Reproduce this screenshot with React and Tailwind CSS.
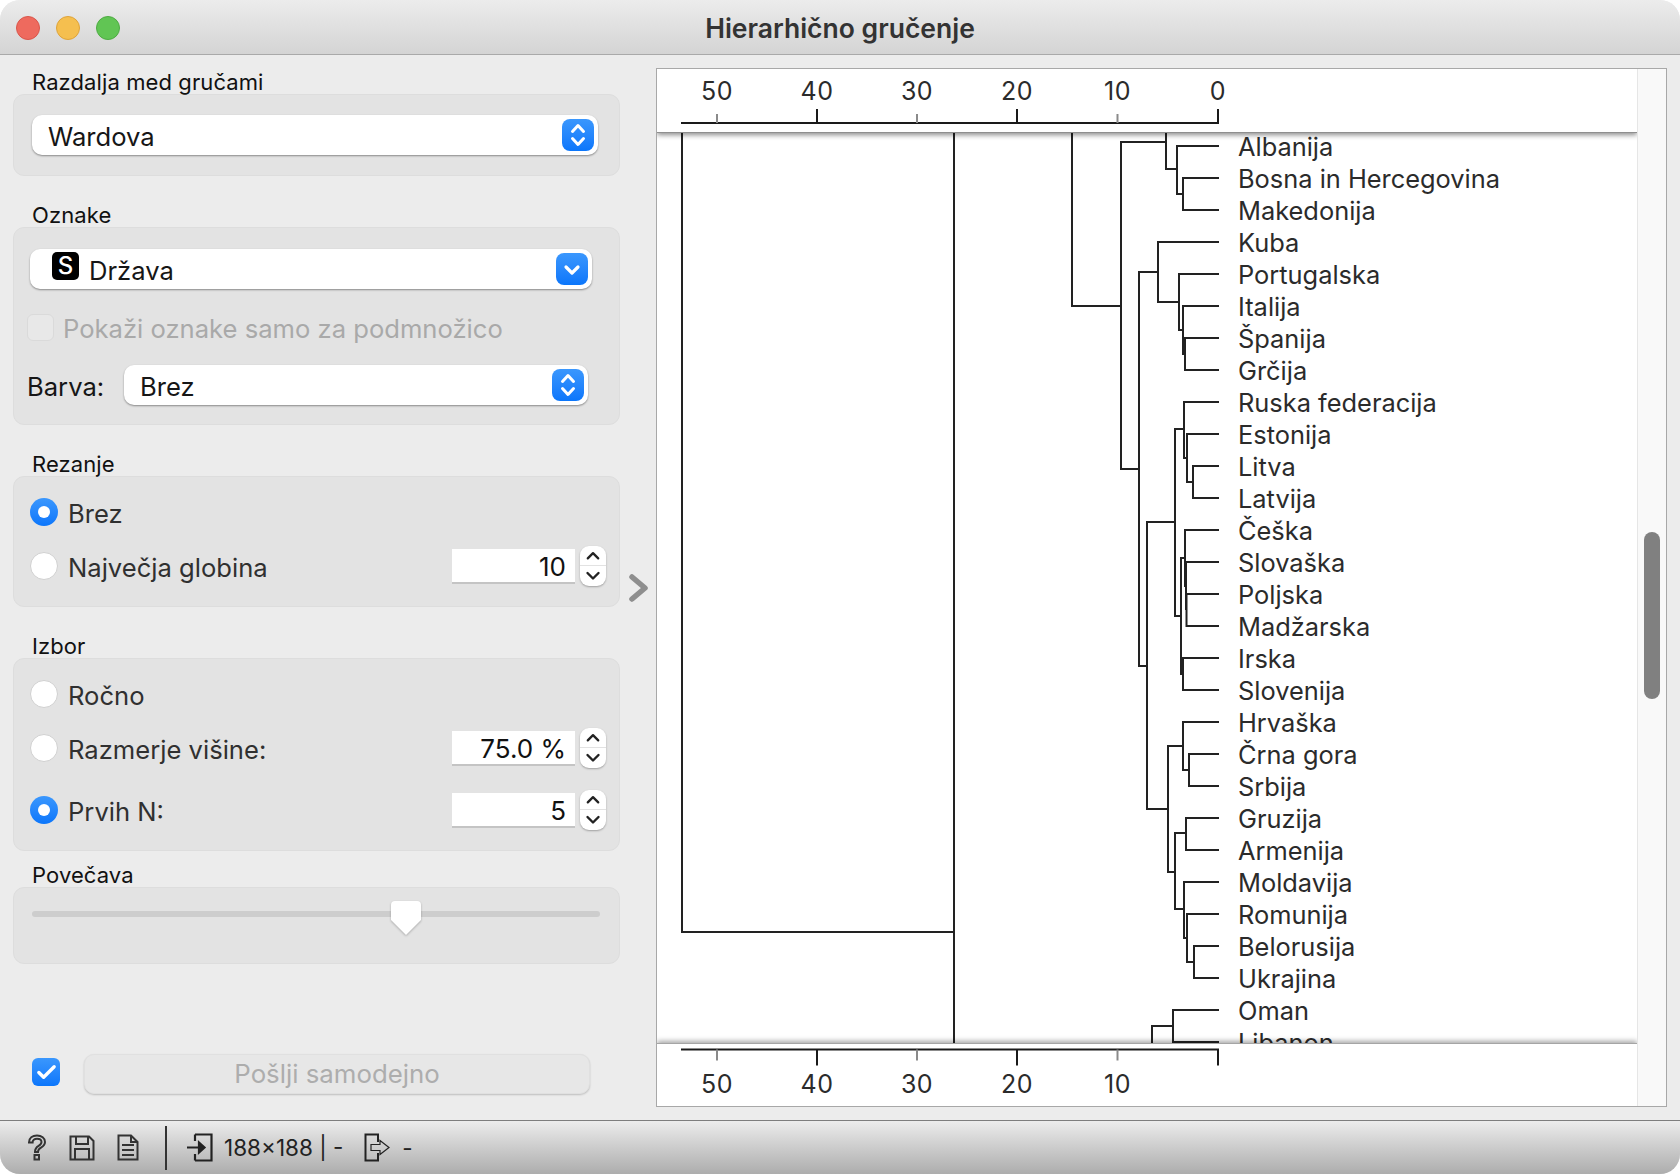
import { Check } from 'lucide-react';

const countries = [
  'Albanija', 'Bosna in Hercegovina', 'Makedonija', 'Kuba', 'Portugalska', 'Italija', 'Španija', 'Grčija',
  'Ruska federacija', 'Estonija', 'Litva', 'Latvija', 'Češka', 'Slovaška', 'Poljska', 'Madžarska', 'Irska',
  'Slovenija', 'Hrvaška', 'Črna gora', 'Srbija', 'Gruzija', 'Armenija', 'Moldavija', 'Romunija', 'Belorusija',
  'Ukrajina', 'Oman', 'Libanon',
];

// dendrogram branches, in window pixels (the svg viewBox starts at 657,133)
const branches = [
  'M682 133V932H954', 'M954 133V1043', 'M1072 133V306H1121', 'M1166 133V169H1177',
  'M1139 469H1121V142H1166', 'M1219 146H1177V194H1183', 'M1219 178H1183V210H1219',
  'M1158 272H1139V666H1147', 'M1219 242H1158V302H1179', 'M1219 274H1179V330H1183',
  'M1219 306H1183V354H1185', 'M1219 338H1185V370H1219',
  'M1184 429H1175V616H1181', 'M1147 522H1175', 'M1219 402H1184V458H1187', 'M1219 434H1187V482H1193',
  'M1219 466H1193V498H1219',
  'M1185 558H1181V674H1183', 'M1219 530H1185V586H1186', 'M1219 562H1186V610', 'M1219 594H1186.5V626H1219',
  'M1219 658H1183V690H1219',
  'M1175 522H1147V809H1168', 'M1183 746H1168V872H1175', 'M1219 722H1183V770H1189', 'M1219 754H1189V786H1219',
  'M1186 833H1175V909H1184', 'M1219 818H1186V850H1219', 'M1219 882H1184V938H1187', 'M1219 914H1187V962H1194',
  'M1219 946H1194V978H1219', 'M1219 1010H1173V1042H1219', 'M1173 1026H1152V1043',
];

const ticks = [
  { x: 717, label: '50', major: false }, { x: 817, label: '40', major: true }, { x: 917, label: '30', major: false },
  { x: 1017, label: '20', major: true }, { x: 1117.5, label: '10', major: false }, { x: 1218, label: '0', major: true },
];

const Updown = () => (
  <svg viewBox="0 0 32 32" className="w-full h-full" fill="none" stroke="white" strokeWidth="3" strokeLinecap="round" strokeLinejoin="round">
    <path d="M10.5 12.5 16 6.5l5.5 6M10.5 19.5l5.5 6 5.5-6" />
  </svg>
);

const Down = () => (
  <svg viewBox="0 0 32 32" className="w-full h-full" fill="none" stroke="white" strokeWidth="3.2" strokeLinecap="round" strokeLinejoin="round">
    <path d="M10 14l6 6 6-6" />
  </svg>
);

const Select = ({ w, children, single }) => (
  <div className={`${w} h-[40px] bg-white rounded-[10px] shadow-[0_1px_2px_rgba(0,0,0,0.4)] flex items-center pr-[4px]`}>
    <div className="flex-1 flex items-center pt-[3px] text-[25.6px] leading-[34px] text-[#161616]">{children}</div>
    <div className="w-[32px] h-[32px] rounded-[8px] bg-gradient-to-b from-[#3a97fd] to-[#0a76fb]">
      {single ? <Down /> : <Updown />}
    </div>
  </div>
);

const Group = ({ title, className, boxClass, children }) => (
  <div className={className}>
    <div className="h-[26px] pl-[19px] text-[22px] leading-[28px] tracking-[0.1px] text-[#111]">{title}</div>
    <div className={`w-[607px] bg-[#e3e3e3] border border-[#dddddd] rounded-[11px] ${boxClass}`}>{children}</div>
  </div>
);

const Radio = ({ on }) => (
  on ? (
    <div className="w-[28px] h-[28px] rounded-full bg-gradient-to-b from-[#3a97fd] to-[#0a76fb] flex items-center justify-center shrink-0">
      <div className="w-[12px] h-[12px] rounded-full bg-white" />
    </div>
  ) : (
    <div className="w-[28px] h-[28px] rounded-full bg-white border border-[#d0d0d0] shrink-0" />
  )
);

const Spin = ({ value }) => (
  <div className="flex items-center ml-auto mr-[13px] gap-[5px]">
    <div className="w-[123px] h-[35px] bg-white border-b-2 border-[#c4c4c4] flex items-center justify-end pr-[9px] pt-[3px] text-[26px] leading-[30px] text-[#111]">
      {value}
    </div>
    <div className="w-[26px] h-[40px] bg-white rounded-[9px] shadow-[0_1px_2px_rgba(0,0,0,0.3)] flex flex-col">
      <svg viewBox="0 0 26 20" className="w-full h-[20px] border-b border-[#e2e2e2]" fill="none" stroke="#222" strokeWidth="2.4" strokeLinecap="round" strokeLinejoin="round">
        <path d="M7.5 13 13 7.5l5.5 5.5" />
      </svg>
      <svg viewBox="0 0 26 20" className="w-full h-[20px]" fill="none" stroke="#222" strokeWidth="2.4" strokeLinecap="round" strokeLinejoin="round">
        <path d="M7.5 7 13 12.5 18.5 7" />
      </svg>
    </div>
  </div>
);

const Row = ({ on, label, className, children }) => (
  <div className={`flex items-center ${className}`}>
    <div className="ml-[16px] mr-[10px] flex"><Radio on={on} /></div>
    <span className="pt-[3px] text-[25.6px] leading-[30px] text-[#303030]">{label}</span>
    {children}
  </div>
);

const Axis = ({ top }) => (
  <svg viewBox={top ? '657 69 980 63' : '657 1044 980 62'} className="w-[980px] h-[63px]">
    <path d={top ? 'M681 123H1219' : 'M681 1049H1219'} stroke="#1a1a1a" strokeWidth="2" fill="none" />
    {ticks.map((t) => (
      <g key={t.x}>
        {top
          ? <path d={`M${t.x} ${t.major ? 109 : 114}V123`} stroke={t.major ? '#1a1a1a' : '#8a8a8a'} strokeWidth="2" />
          : <path d={`M${t.x} 1049V${t.major ? 1065 : 1060}`} stroke={t.major ? '#1a1a1a' : '#8a8a8a'} strokeWidth="2" />}
        {(top || t.label !== '0') && (
          <text x={t.x} y={top ? 100 : 1092} textAnchor="middle" fontSize="25" letterSpacing="0.5" fill="#2b2b2b" fontFamily="Inter, sans-serif">
            {t.label}
          </text>
        )}
      </g>
    ))}
  </svg>
);

const icon = { fill: 'none', stroke: '#333', strokeWidth: 2 };

export default function App() {
  return (
    <div className="w-[1680px] h-[1174px] bg-white font-[Inter,sans-serif]">
      <div className="w-full h-full rounded-[20px] overflow-hidden flex flex-col bg-[#ececec]">
        {/* Title bar */}
        <div className="h-[55px] grid grid-cols-[1fr_auto_1fr] items-center bg-gradient-to-b from-[#ececec] to-[#d4d4d4] border-b border-[#a9a9a9]">
          <div className="flex gap-[16px] pl-[16px] pt-[1px]">
            <div className="w-[24px] h-[24px] rounded-full bg-[#ee6a5e] border border-[#d9564b]" />
            <div className="w-[24px] h-[24px] rounded-full bg-[#f5bf4f] border border-[#dea33a]" />
            <div className="w-[24px] h-[24px] rounded-full bg-[#61c554] border border-[#4eab43]" />
          </div>
          <div className="pt-[2px] text-[26.5px] leading-[36px] font-semibold text-[#333]">Hierarhično gručenje</div>
          <div />
        </div>

        <div className="flex-1 flex min-h-0">
          {/* Controls */}
          <div className="w-[620px] pl-[13px] flex flex-col">
            <Group title="Razdalja med gručami" className="mt-[13px]" boxClass="h-[82px] pt-[20px] pl-[18px]">
              <Select w="w-[566px]"><span className="pl-[16px]">Wardova</span></Select>
            </Group>

            <Group title="Oznake" className="mt-[25px]" boxClass="h-[198px] pt-[21px] pl-[16px]">
              <Select w="w-[562px]" single>
                <span className="ml-[22px] mb-[10px] w-[27px] h-[28px] rounded-[5px] bg-black text-white text-[24px] font-medium flex items-center justify-center">S</span>
                <span className="pl-[10px]">Država</span>
              </Select>
              <div className="flex items-center h-[27px] mt-[25px] -ml-[3px]">
                <div className="w-[27px] h-[27px] rounded-[6px] bg-[#e8e8e8] border border-[#dadada]" />
                <span className="ml-[9px] pt-[3px] text-[25.6px] leading-[30px] text-[#a9a9a9]">Pokaži oznake samo za podmnožico</span>
              </div>
              <div className="flex items-center mt-[24px] -ml-[3px]">
                <span className="w-[97px] pt-[3px] text-[25.6px] leading-[30px] text-[#161616]">Barva:</span>
                <Select w="w-[464px]"><span className="pl-[16px]">Brez</span></Select>
              </div>
            </Group>

            <Group title="Rezanje" className="mt-[25px]" boxClass="h-[131px] pt-[21px]">
              <Row on label="Brez" className="h-[28px]" />
              <Row label="Največja globina" className="h-[28px] mt-[26px]"><Spin value="10" /></Row>
            </Group>

            <Group title="Izbor" className="mt-[25px]" boxClass="h-[193px] pt-[21px]">
              <Row label="Ročno" className="h-[28px]" />
              <Row label="Razmerje višine:" className="h-[28px] mt-[26px]"><Spin value="75.0 %" /></Row>
              <Row on label="Prvih N:" className="h-[28px] mt-[34px]"><Spin value="5" /></Row>
            </Group>

            <Group title="Povečava" className="mt-[10px]" boxClass="h-[77px] pt-[23px] pl-[18px]">
              <div className="relative w-[568px] h-[6px] rounded-full bg-[#cdcdcd]">
                <svg viewBox="0 0 30 34" className="absolute left-[359px] -top-[10px] w-[30px] h-[34px] drop-shadow-[0_1px_1px_rgba(0,0,0,0.25)]">
                  <path d="M4 0H26a4 4 0 0 1 4 4V19L15 34 0 19V4a4 4 0 0 1 4-4Z" fill="white" />
                </svg>
              </div>
            </Group>

            <div className="mt-auto mb-[26px] flex items-center pl-[19px]">
              <div className="w-[28px] h-[28px] mb-[4px] rounded-[6px] bg-gradient-to-b from-[#3a97fd] to-[#0a76fb] flex items-center justify-center">
                <Check size={23} color="white" strokeWidth={3.5} />
              </div>
              <div className="ml-[24px] w-[506px] h-[40px] rounded-[10px] bg-[#e7e7e7] border border-[#e0e0e0] shadow-[0_1px_2px_rgba(0,0,0,0.2)] flex items-center justify-center text-[25.8px] text-[#adadad]">
                Pošlji samodejno
              </div>
            </div>
          </div>

          <div className="w-[36px] flex items-center pl-[8px]">
            <svg viewBox="0 0 22 28" className="w-[22px] h-[28px]" fill="none" stroke="#8e8e8e" strokeWidth="5.5" strokeLinecap="round" strokeLinejoin="round">
              <path d="M4 3l13 11L4 25" />
            </svg>
          </div>

          {/* Dendrogram */}
          <div className="w-[1011px] my-[13px] border border-[#a8a8a8] bg-white flex">
            <div className="w-[980px] flex flex-col overflow-hidden">
              <div className="h-[64px] relative z-10 bg-white border-b border-[#8f8f8f] shadow-[0_2px_5px_rgba(0,0,0,0.45)]">
                <Axis top />
              </div>
              <div className="h-[910px] flex overflow-hidden">
                <svg viewBox="657 133 564 910" className="w-[564px] h-[910px] shrink-0" fill="none" stroke="#222" strokeWidth="2">
                  {branches.map((d) => <path key={d} d={d} />)}
                </svg>
                <div className="pl-[17px] -mt-[2px]">
                  {countries.map((c) => (
                    <div key={c} className="h-[32px] flex items-center text-[25.4px] text-[#2b2b2b] whitespace-nowrap">{c}</div>
                  ))}
                </div>
              </div>
              <div className="h-[63px] relative z-10 bg-white border-t border-[#a5a5a5] shadow-[0_-2px_5px_rgba(0,0,0,0.35)]">
                <Axis />
              </div>
            </div>
            <div className="flex-1 bg-[#f9f9f9] border-l border-[#e6e6e6] flex flex-col items-center">
              <div className="mt-[463px] w-[16px] h-[167px] rounded-full bg-[#808080]" />
            </div>
          </div>
        </div>

        {/* Status bar */}
        <div className="h-[54px] flex items-center pl-[27px] bg-gradient-to-b from-[#ececec] to-[#adadad] border-t border-[#7d7d7d] text-[22.5px] text-[#222]">
          <svg viewBox="0 0 20 27" className="w-[20px] h-[27px]" {...icon}>
            <path d="M2 8.5C2 4 5.5 1.5 10 1.5s8 2.7 8 6.5c0 3-1.8 4.3-4 5.6-1.9 1.1-3 2-3 4.4H8c0-3.3 1.5-5 3.6-6.2 1.8-1 2.9-2 2.9-3.8 0-2-1.9-3.3-4.5-3.3S5.600 6 5.600 8.500Z" />
            <rect x="7.500" y="21" width="4.500" height="4.500" />
          </svg>
          <svg viewBox="0 0 26 26" className="ml-[22px] w-[26px] h-[26px]" {...icon}>
            <path d="M1.500 1.500H20L24.500 6V24.500H1.500Z" />
            <path d="M7 1.500V9H19V1.500M6 24.500V14H20V24.500" />
          </svg>
          <svg viewBox="0 0 22 27" className="ml-[22px] w-[22px] h-[27px]" {...icon}>
            <path d="M1.500 1.500H14L20.500 8V25.500H1.500Z" />
            <path d="M14 1.500V8H20.500M5 11H17M5 16H17M5 21H17" />
          </svg>
          <div className="ml-[26px] w-[2px] h-[44px] bg-[#333]" />
          <svg viewBox="0 0 26 29" className="ml-[20px] w-[26px] h-[29px]" fill="none" stroke="#222" strokeWidth="2.200">
            <path d="M8 1.500H24.500V27.500H8M8 8V1.500M8 27.500V21" />
            <path d="M0 14.500H16" />
            <path d="M12 9.500 17.500 14.500 12 19.500Z" fill="#222" />
          </svg>
          <span className="ml-[11px]">188×188 | -</span>
          <svg viewBox="0 0 27 29" className="ml-[21px] w-[27px] h-[29px]" fill="none" stroke="#222" strokeWidth="2">
            <path d="M14 9V1.500H1.500V27.500H14V20" />
            <path d="M7 11.500H16V7.500L25 14.500 16 21.500V17.500H7Z" strokeWidth="1.200" />
          </svg>
          <span className="ml-[11px]">-</span>
        </div>
      </div>
    </div>
  );
}
